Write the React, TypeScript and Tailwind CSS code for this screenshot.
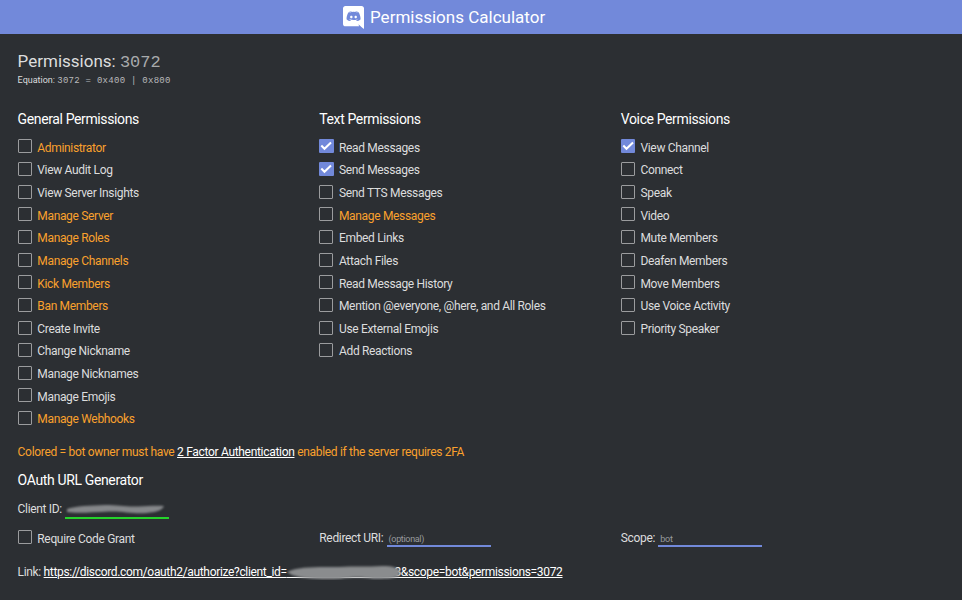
type Perm = { name: string; mfa?: boolean; on?: boolean };

const general: Perm[] = [
  { name: 'Administrator', mfa: true },
  { name: 'View Audit Log' },
  { name: 'View Server Insights' },
  { name: 'Manage Server', mfa: true },
  { name: 'Manage Roles', mfa: true },
  { name: 'Manage Channels', mfa: true },
  { name: 'Kick Members', mfa: true },
  { name: 'Ban Members', mfa: true },
  { name: 'Create Invite' },
  { name: 'Change Nickname' },
  { name: 'Manage Nicknames' },
  { name: 'Manage Emojis' },
  { name: 'Manage Webhooks', mfa: true },
];

const text: Perm[] = [
  { name: 'Read Messages', on: true },
  { name: 'Send Messages', on: true },
  { name: 'Send TTS Messages' },
  { name: 'Manage Messages', mfa: true },
  { name: 'Embed Links' },
  { name: 'Attach Files' },
  { name: 'Read Message History' },
  { name: 'Mention @everyone, @here, and All Roles' },
  { name: 'Use External Emojis' },
  { name: 'Add Reactions' },
];

const voice: Perm[] = [
  { name: 'View Channel', on: true },
  { name: 'Connect' },
  { name: 'Speak' },
  { name: 'Video' },
  { name: 'Mute Members' },
  { name: 'Deafen Members' },
  { name: 'Move Members' },
  { name: 'Use Voice Activity' },
  { name: 'Priority Speaker' },
];

function DiscordLogo() {
  return (
    <svg viewBox="0 0 448 512" preserveAspectRatio="none" className="h-[23px] w-[21px] shrink-0 fill-white">
      <path d="M297.216 243.2c0 15.616-11.52 28.416-26.112 28.416-14.336 0-26.112-12.8-26.112-28.416s11.52-28.416 26.112-28.416c14.592 0 26.112 12.8 26.112 28.416zm-119.552-28.416c-14.592 0-26.112 12.8-26.112 28.416s11.776 28.416 26.112 28.416c14.592 0 26.112-12.8 26.112-28.416.256-15.616-11.52-28.416-26.112-28.416zM448 52.736V512c-64.494-56.994-43.868-38.128-118.784-107.776l13.568 47.36H52.48C23.552 451.584 0 428.032 0 398.848V52.736C0 23.552 23.552 0 52.48 0h343.04C424.448 0 448 23.552 448 52.736zm-72.96 242.688c0-82.432-36.864-149.248-36.864-149.248-36.864-27.648-71.936-26.88-71.936-26.88l-3.584 4.096c43.52 13.312 63.744 32.512 63.744 32.512-60.811-33.329-132.244-33.335-191.232-7.424-9.472 4.352-15.104 7.424-15.104 7.424s21.248-20.224 67.328-33.536l-2.56-3.072s-35.072-.768-71.936 26.88c0 0-36.864 66.816-36.864 149.248 0 0 21.504 37.12 78.08 38.912 0 0 9.472-11.52 17.152-21.248-32.512-9.728-44.8-30.208-44.8-30.208 3.766 2.636 9.976 6.053 10.496 6.4 43.21 24.198 104.588 32.126 159.744 8.96 8.96-3.328 18.944-8.192 29.44-15.104 0 0-12.8 20.992-46.336 30.464 7.68 9.728 16.896 20.736 16.896 20.736 56.576-1.792 78.336-38.912 78.336-38.912z" />
    </svg>
  );
}

function Check({ perm }: { perm: Perm }) {
  return (
    <label className="flex h-[22.65px] items-start">
      {perm.on ? (
        <span className="mt-[3px] mr-[5.200px] h-[14px] w-[14.500px] rounded-[1px] bg-[#7289da]">
          <svg viewBox="0 0 15 15" className="h-[14px] w-[14.500px] fill-none stroke-white stroke-[2.2]">
            <path d="M2.200 7 5.600 10.400 12.600 3.800" />
          </svg>
        </span>
      ) : (
        <span className="mt-[3px] mr-[5.700px] h-[14px] w-[14px] rounded-[1px] border border-[#9b9c9e]" />
      )}
      <span className={perm.mfa ? 'pt-[3.300px] leading-4 text-[#faa12d]' : 'pt-[3.300px] leading-4'}>{perm.name}</span>
    </label>
  );
}

function Column({ title, perms }: { title: string; perms: Perm[] }) {
  return (
    <section>
      <h2 className="mb-[8.400px] text-[14px] leading-[18px] tracking-[-0.38px] text-white">{title}</h2>
      {perms.map((p) => (
        <Check key={p.name} perm={p} />
      ))}
    </section>
  );
}

function Field({ label, hint }: { label: string; hint: string }) {
  return (
    <label className="flex h-[22px]">
      <span className="pt-[3px] leading-4">{label}</span>
      <span className="ml-[3.300px] flex w-[104px] flex-col pt-[4px]">
        <span className="h-[14px] pl-[2px] text-[9px] leading-4 text-[#999b9e]">{hint}</span>
        <span className="h-[1.500px] bg-[#7289da]" />
      </span>
    </label>
  );
}

export default function App() {
  return (
    <div className="h-[600px] w-[962px] overflow-hidden bg-[#2c2f33] font-['Roboto',sans-serif] text-[12px] tracking-[-0.33px] whitespace-nowrap text-[#dcddde]">
      <header className="flex h-[34px] items-center bg-[#7289da] pl-[343px]">
        <DiscordLogo />
        <h1 className="ml-[6px] text-[17px] leading-5 tracking-normal text-white">Permissions Calculator</h1>
      </header>
      <main className="pl-[17.6px]">
        <div className="pt-[17px] text-[17px] leading-5 tracking-normal">
          Permissions: <span className="font-['Liberation_Mono',monospace] text-[#a8aaac]">3072</span>
        </div>
        <div className="mt-[1px] text-[9px] leading-3 tracking-normal">
          Equation:{' '}
          <span className="font-['Liberation_Mono',monospace] tracking-[0.27px] text-[#b9babc]">3072 = 0x400 | 0x800</span>
        </div>
        <div className="mt-[23px] grid grid-cols-[301.7px_301.5px_1fr]">
          <Column title="General Permissions" perms={general} />
          <Column title="Text Permissions" perms={text} />
          <Column title="Voice Permissions" perms={voice} />
        </div>
        <p className="mt-[13.600px] leading-4 tracking-[-0.31px] text-[#faa12d]">
          Colored = bot owner must have <a className="text-white underline">2 Factor Authentication</a> enabled if the
          server requires 2FA
        </p>
        <h2 className="mt-[11px] text-[14px] leading-[18px] tracking-[-0.36px] text-white">OAuth URL Generator</h2>
        <div className="mt-[9px] flex h-[22px] items-start">
          <span className="pt-[3px] leading-4">Client ID:</span>
          <span className="ml-[3px] flex w-[104.500px] flex-col">
            <svg viewBox="0 0 104 19" className="h-[19px] w-[104px]">
              <path
                d="M2 11C10 8 26 7.500 40 7c14 0 20 2 33 1.500 10-.5 18-1 26-.5-2 5-9 6-17 7-16 1-23-2-38-1.500-17 1-34 2-42 .5z"
                className="fill-[#85878a] blur-[1px]"
              />
            </svg>
            <span className="h-[1.500px] bg-[#25d32b]" />
          </span>
        </div>
        <div className="mt-[7px] grid grid-cols-[301.7px_301.5px_1fr]">
          <Check perm={{ name: 'Require Code Grant' }} />
          <Field label="Redirect URI:" hint="(optional)" />
          <Field label="Scope:" hint="bot" />
        </div>
        <p className="mt-[14px] flex leading-4">
          Link:&nbsp;
          <a className="flex text-white underline">
            https://discord.com/oauth2/authorize?client_id=
            <span className="relative inline-block w-[114px] text-right">
              3
              <svg viewBox="0 0 114 16" className="absolute top-0 left-0 h-4 w-[114px]">
                <path d="M0 13.500H114" className="stroke-white" />
                <path
                  d="M0 8C12 2 34 3 52 3c15-1 29 0 43-1 11 0 17 2 18 5l-1 5c-6 3-14 3-26 3-11-2-20-2-33 0-18 1-37 0-48-4z"
                  className="fill-[#8a8c8e] blur-[1px]"
                />
              </svg>
            </span>
            &amp;scope=bot&amp;permissions=3072
          </a>
        </p>
      </main>
    </div>
  );
}
